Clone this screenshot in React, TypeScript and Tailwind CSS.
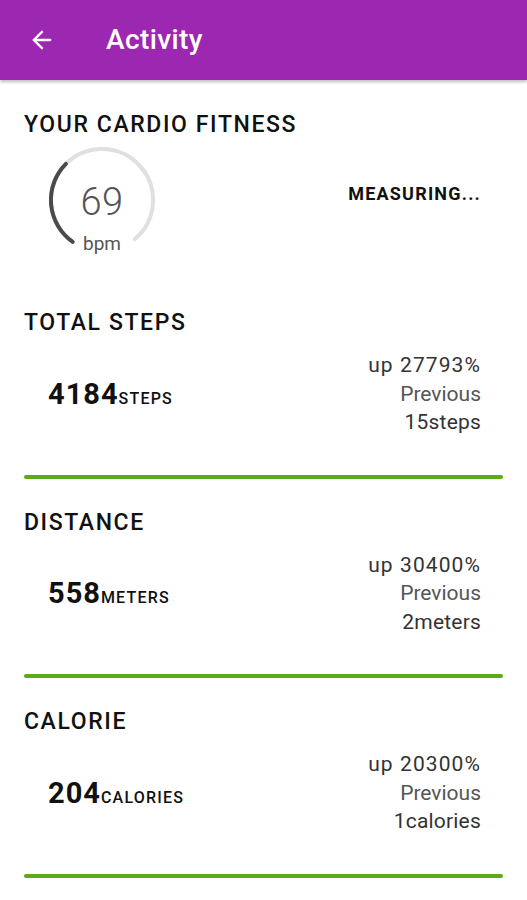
import { ArrowLeft } from 'lucide-react';

type Stat = {
  title: string;
  value: string;
  unit: string;
  change: string;
  previous: string;
};

const stats: Stat[] = [
  { title: 'TOTAL STEPS', value: '4184', unit: 'STEPS', change: 'up 27793%', previous: '15steps' },
  { title: 'DISTANCE', value: '558', unit: 'METERS', change: 'up 30400%', previous: '2meters' },
  { title: 'CALORIE', value: '204', unit: 'CALORIES', change: 'up 20300%', previous: '1calories' },
];

function Gauge() {
  return (
    <div className="relative w-[112px] h-[112px]">
      <svg className="absolute inset-0" width="112" height="112" viewBox="0 0 112 112" fill="none">
        <path d="M26.7 97.8 A51 51 0 1 1 88.8 95.1" stroke="#e0e0e0" strokeWidth={4} strokeLinecap="round" />
        <path d="M26.7 97.8 A51 51 0 0 1 19.9 19.9" stroke="#4a4a4a" strokeWidth={4} strokeLinecap="round" />
      </svg>
      <div className="absolute inset-0 flex flex-col items-center text-[#555]">
        <span className="mt-[37px] text-[38px] leading-[42px] font-light tracking-[0.5px]">69</span>
        <span className="mt-[11px] text-[19px] leading-[20px]">bpm</span>
      </div>
    </div>
  );
}

function StatSection({ stat }: { stat: Stat }) {
  return (
    <section className="pt-[31px]">
      <h2 className="text-[23px] leading-[25px] font-medium tracking-[1.6px] text-[#111]">{stat.title}</h2>
      <div className="mt-4 flex items-center justify-between pl-6 pr-[22px]">
        <div className="flex items-baseline text-[#111]">
          <span className="text-[29px] leading-[34px] font-bold tracking-[1px]">{stat.value}</span>
          <span className="text-[16px] font-medium tracking-[1.2px]">{stat.unit}</span>
        </div>
        <div className="flex flex-col items-end text-[21px] leading-[28.5px]">
          <span className="text-[#333] tracking-[1.1px]">{stat.change}</span>
          <span className="text-[#555]">Previous</span>
          <span className="text-[#333] tracking-[0.2px]">{stat.previous}</span>
        </div>
      </div>
      <div className="mt-[38px] h-1 rounded-full bg-[#5aab17]" />
    </section>
  );
}

export default function App() {
  return (
    <div className="w-[527px] h-[900px] bg-white overflow-hidden font-['Roboto','Noto_Sans',sans-serif]">
      <header className="h-[80px] bg-[#9c27b0] flex items-center shadow-[0_2px_3px_rgba(0,0,0,0.25)] relative">
        <ArrowLeft className="ml-[28px] text-white" size={28} strokeWidth={2} />
        <h1 className="ml-[50px] text-white text-[28px] font-medium tracking-[0.4px]">Activity</h1>
      </header>
      <main className="px-6">
        <section className="pt-[32px]">
          <h2 className="text-[23px] leading-[25px] font-medium tracking-[1.6px] text-[#111]">YOUR CARDIO FITNESS</h2>
          <div className="mt-[7px] flex items-start justify-between pr-[22px]">
            <div className="ml-[22px]">
              <Gauge />
            </div>
            <span className="mt-[40px] text-[18px] leading-[20px] font-bold tracking-[1.2px] text-[#111]">MEASURING...</span>
          </div>
        </section>
        <div className="pt-[23px]">
          {stats.map((s) => (
            <StatSection key={s.title} stat={s} />
          ))}
        </div>
      </main>
    </div>
  );
}
